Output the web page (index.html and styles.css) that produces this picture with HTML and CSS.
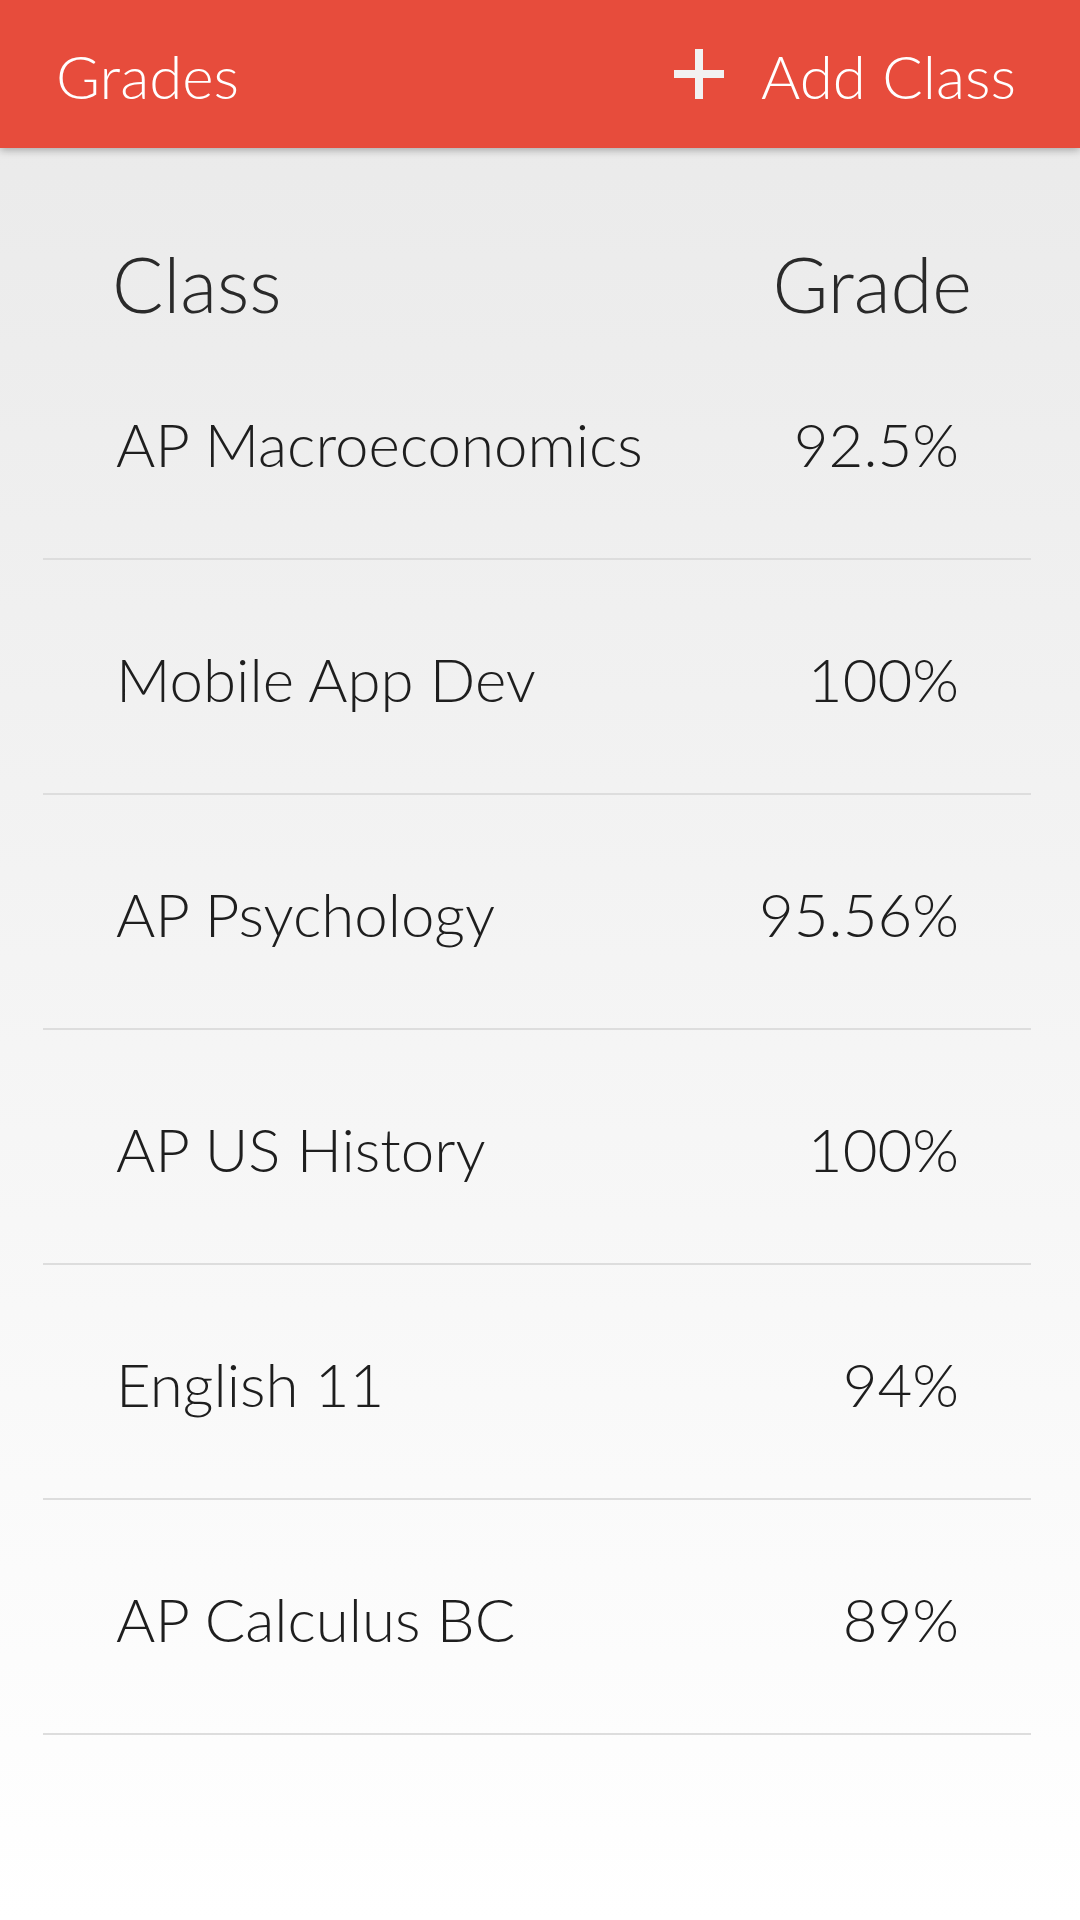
FILE: index.html
```html
<!DOCTYPE html>
<html lang="en">
<head>
  <meta charset="UTF-8">
  <title>Grades</title>
  <link rel="stylesheet" href="styles.css">
</head>
<body>

<div class="topbar">
  <span class="title">Grades</span>
  <a class="add-btn" href="#">
    <svg class="plus" width="50" height="50" viewBox="0 0 50 50">
      <rect x="21" y="0" width="8" height="50" fill="#f2f2f2"/>
      <rect x="0" y="21" width="50" height="8" fill="#f2f2f2"/>
    </svg>
    <span>Add Class</span>
  </a>
</div>

<div class="content">
  <div class="columns">
    <span>Class</span>
    <span>Grade</span>
  </div>

  <ul class="grade-list">
    <li class="row"><span>AP Macroeconomics</span><span>92.5%</span></li>
    <li class="row"><span>Mobile App Dev</span><span>100%</span></li>
    <li class="row"><span>AP Psychology</span><span>95.56%</span></li>
    <li class="row"><span>AP US History</span><span>100%</span></li>
    <li class="row"><span>English 11</span><span>94%</span></li>
    <li class="row"><span>AP Calculus BC</span><span>89%</span></li>
  </ul>
</div>

</body>
</html>
```

FILE: styles.css
```css
html, body {
  margin: 0;
  padding: 0;
}
body {
  font-family: "Lato Light", Lato, "Open Sans", sans-serif;
  font-weight: 300;
  color: #1e1e1e;
  width: 1080px;
  min-height: 1920px;
  background: linear-gradient(to bottom, #e9e9e9 0%, #f4f4f4 50%, #ffffff 100%);
}
.topbar {
  position: relative;
  z-index: 1;
  height: 148px;
  box-sizing: border-box;
  padding: 4px 64px 0 56px;
  display: flex;
  align-items: center;
  justify-content: space-between;
  background-color: #e74c3c;
  color: #fff;
  font-size: 60px;
  box-shadow: 0 2px 8px rgba(0, 0, 0, 0.3);
}
.add-btn {
  display: flex;
  align-items: center;
  gap: 37px;
  color: #fff;
  text-decoration: none;
}
.plus {
  display: block;
  margin-top: -4px;
}
.columns {
  display: flex;
  justify-content: space-between;
  padding: 98px 108px 3px 112px;
  font-size: 76px;
  line-height: 76px;
  color: #2a2a2a;
}
.grade-list {
  list-style: none;
  margin: 0 49px 0 43px;
  padding: 0;
}
.row {
  display: flex;
  justify-content: space-between;
  height: 235px;
  box-sizing: border-box;
  padding: 83px 72px 0 73px;
  font-size: 60px;
  line-height: 72px;
  border-bottom: 2px solid #dddddd;
}
```
